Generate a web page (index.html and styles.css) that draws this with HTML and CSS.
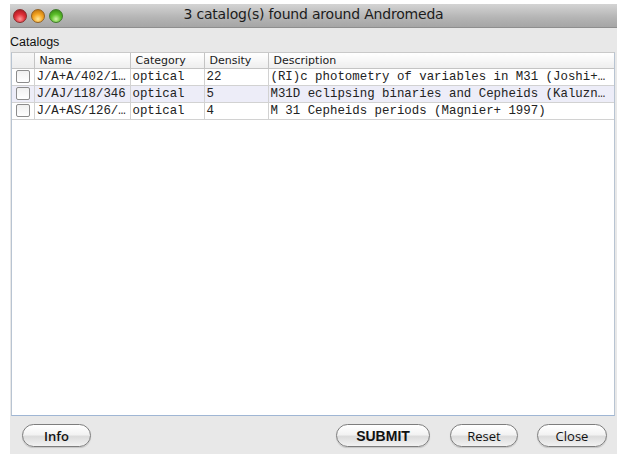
FILE: index.html
```html
<!DOCTYPE html>
<html>
<head>
<meta charset="utf-8">
<title>Catalogs</title>
<link rel="stylesheet" href="styles.css">
</head>
<body>
<div class="window">
  <div class="titlebar">
    <div class="lights">
      <span class="light red"></span>
      <span class="light orange"></span>
      <span class="light green"></span>
    </div>
    <div class="title">3 catalog(s) found around Andromeda</div>
  </div>
  <div class="content">
    <div class="section-label">Catalogs</div>
    <div class="table-box">
      <table class="grid">
        <colgroup>
          <col class="c-check">
          <col class="c-name">
          <col class="c-cat">
          <col class="c-dens">
          <col class="c-desc">
        </colgroup>
        <thead>
          <tr>
            <th></th>
            <th>Name</th>
            <th>Category</th>
            <th>Density</th>
            <th>Description</th>
          </tr>
        </thead>
        <tbody>
          <tr>
            <td><span class="check"></span></td>
            <td>J/A+A/402/1…</td>
            <td>optical</td>
            <td>22</td>
            <td>(RI)c photometry of variables in M31 (Joshi+…</td>
          </tr>
          <tr class="alt">
            <td><span class="check"></span></td>
            <td>J/AJ/118/346</td>
            <td>optical</td>
            <td>5</td>
            <td>M31D eclipsing binaries and Cepheids (Kaluzn…</td>
          </tr>
          <tr>
            <td><span class="check"></span></td>
            <td>J/A+AS/126/…</td>
            <td>optical</td>
            <td>4</td>
            <td>M 31 Cepheids periods (Magnier+ 1997)</td>
          </tr>
        </tbody>
      </table>
    </div>
    <div class="buttons">
      <button class="btn btn-info">Info</button>
      <span class="spacer"></span>
      <button class="btn btn-submit">SUBMIT</button>
      <button class="btn btn-reset">Reset</button>
      <button class="btn btn-close">Close</button>
    </div>
  </div>
</div>
</body>
</html>
```

FILE: styles.css
```css
html, body {
  margin: 0;
  padding: 0;
  background: #ffffff;
}

body {
  padding: 4px 1px 0 10px;
  width: 618px;
  height: 457px;
  box-sizing: border-box;
  overflow: hidden;
}

.window {
  width: 607px;
  height: 450px;
  display: flex;
  flex-direction: column;
  background: #e8e8e8;
}

/* title bar with the three window lights */
.titlebar {
  height: 23px;
  flex: none;
  position: relative;
  background: linear-gradient(#d4d4d4, #b4b4b4 60%, #a6a6a6);
  border-bottom: 1px solid #8e8e8e;
  display: flex;
  align-items: center;
}

.lights {
  display: flex;
  gap: 4px;
  padding-left: 3px;
  position: relative;
  z-index: 1;
}

.light {
  width: 14px;
  height: 14px;
  border-radius: 50%;
  box-sizing: border-box;
}

.light.red {
  background: radial-gradient(circle at 50% 75%, #ff9a9a 0, #e0303a 45%, #9a0f18 100%);
  border: 1px solid #8a2a2a;
}

.light.orange {
  background: radial-gradient(circle at 50% 75%, #ffe89a 0, #f5a623 45%, #b06508 100%);
  border: 1px solid #946020;
}

.light.green {
  background: radial-gradient(circle at 50% 75%, #d0f8a6 0, #5cbf2a 45%, #2e7a10 100%);
  border: 1px solid #3f7a2a;
}

.title {
  position: absolute;
  left: 0;
  right: 0;
  top: 2px;
  text-align: center;
  font-family: "DejaVu Sans", sans-serif;
  font-size: 14px;
  color: #1c1c1c;
  letter-spacing: -0.2px;
}

.content {
  flex: 1;
  display: flex;
  flex-direction: column;
  padding: 0 2px 0 1px;
}

.section-label {
  font-family: "Liberation Sans", Arial, sans-serif;
  font-size: 12.5px;
  color: #111;
  height: 24px;
  box-sizing: border-box;
  padding-top: 4px;
  line-height: 20px;
  margin-left: -1px;
}

/* table area */
.table-box {
  height: 364px;
  background: #ffffff;
  border: 1px solid #b8c4d2;
  border-bottom-color: #9fb6d4;
  border-top-color: #c9c9c9;
  box-sizing: border-box;
}

.grid {
  border-collapse: collapse;
  width: 100%;
  table-layout: fixed;
}

.c-check { width: 22px; }
.c-name { width: 96px; }
.c-cat { width: 74px; }
.c-dens { width: 64px; }
.c-desc { width: auto; }

.grid th {
  height: 15px;
  padding: 0 0 0 5px;
  text-align: left;
  font-family: "DejaVu Sans", sans-serif;
  font-weight: normal;
  font-size: 11px;
  color: #1a1a1a;
  background: linear-gradient(#ffffff, #eeeeee);
  border-right: 1px solid #c4c4c4;
  border-bottom: 1px solid #c4c4c4;
  white-space: nowrap;
  overflow: hidden;
}

.grid th:first-child {
  background: linear-gradient(#f7f7f7, #ececec);
}

.grid td {
  height: 16px;
  padding: 0 0 0 2px;
  font-family: "Liberation Mono", "Courier New", monospace;
  font-size: 12.4px;
  color: #222;
  border-right: 1px solid #d2d2d2;
  border-bottom: 1px solid #d2d2d2;
  white-space: nowrap;
  overflow: hidden;
  vertical-align: middle;
}

.grid td:first-child {
  padding: 0;
  text-align: center;
}

.grid tr.alt td {
  background: #ededf8;
}

.grid th:last-child,
.grid td:last-child {
  border-right: none;
}

.check {
  display: inline-block;
  width: 14px;
  height: 13px;
  box-sizing: border-box;
  border: 1px solid #8c8c8c;
  border-radius: 2px;
  background: linear-gradient(#f0f0f0, #ffffff);
  vertical-align: middle;
  margin-top: -1px;
}

/* bottom button row */
.buttons {
  flex: 1;
  display: flex;
  align-items: center;
  padding: 0 8px 0 11px;
  gap: 0;
}

.spacer {
  flex: 1;
}

.btn {
  height: 23px;
  border-radius: 12px;
  border: 1px solid #7d7d7d;
  background: linear-gradient(#ffffff 0%, #f3f3f3 45%, #dcdcdc 55%, #f2f2f2 100%);
  font-family: "Open Sans", "DejaVu Sans", sans-serif;
  font-size: 13px;
  color: #111;
  padding: 0;
  margin-top: 1px;
  box-shadow: 0 1px 1px rgba(0,0,0,0.15);
}

.btn-info { width: 69px; font-weight: 600; }
.btn-submit { width: 94px; font-weight: bold; font-family: "Liberation Sans", Arial, sans-serif; font-size: 14px; margin-right: 20px; }
.btn-reset { width: 68px; margin-right: 19px; }
.btn-close { width: 70px; }
```
